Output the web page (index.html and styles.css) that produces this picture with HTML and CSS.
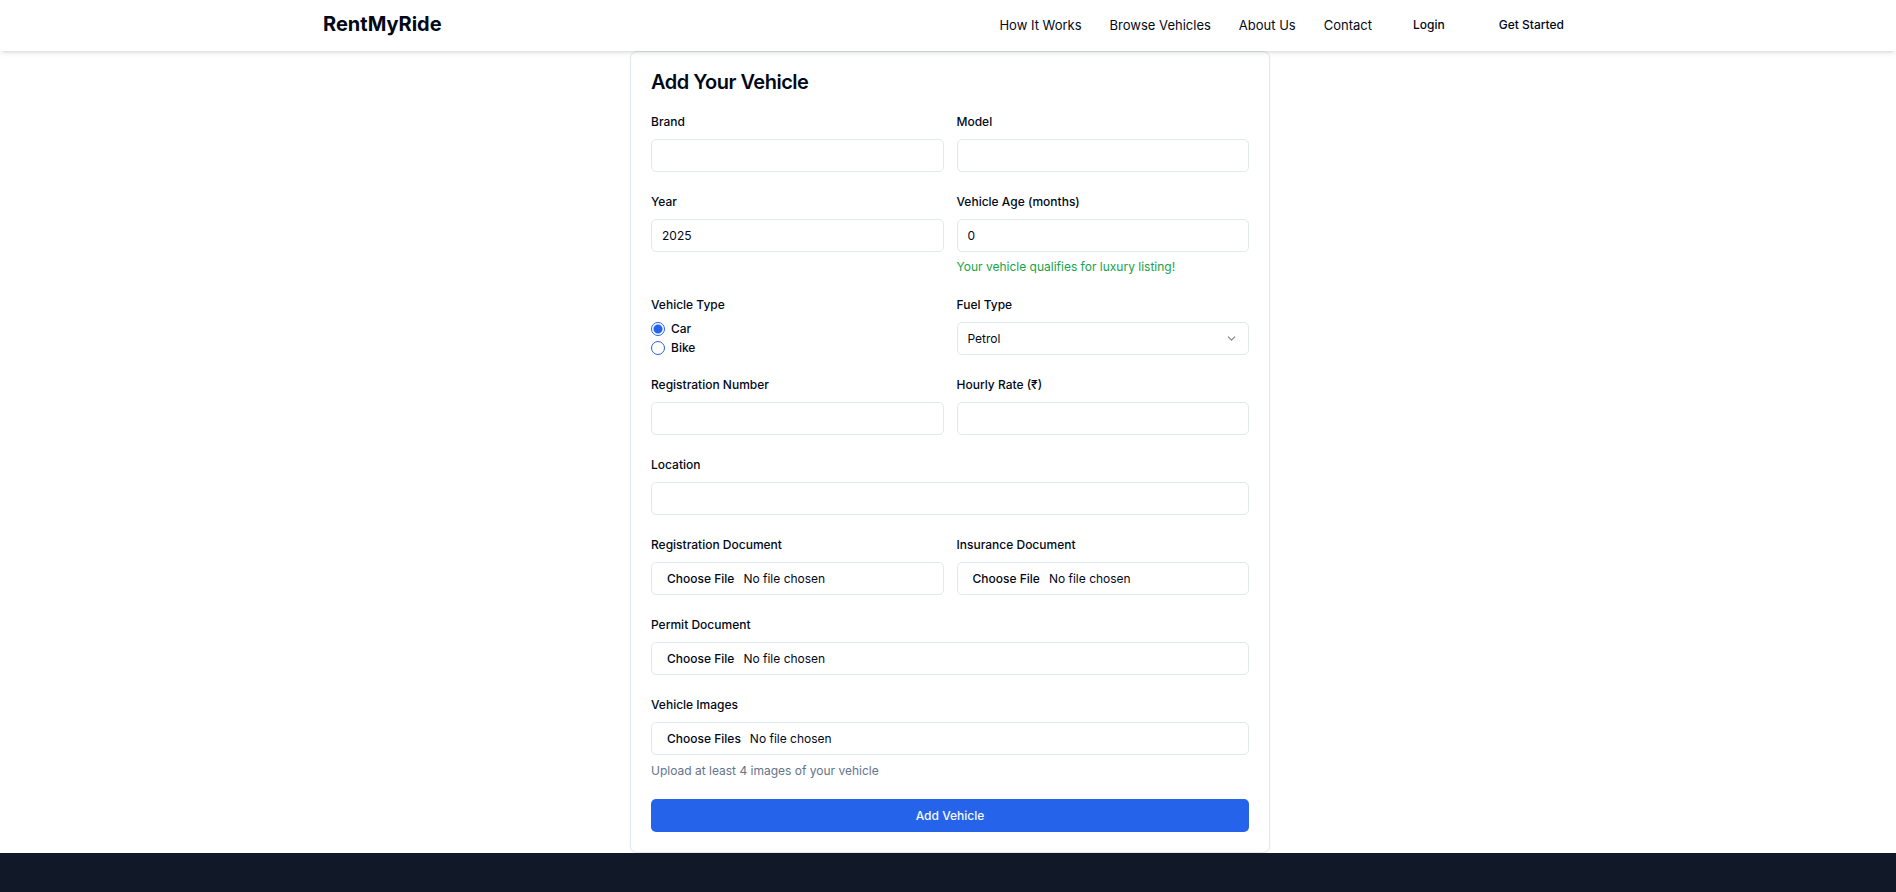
FILE: index.html
```html
<!DOCTYPE html>
<html lang="en">
<head>
  <meta charset="utf-8">
  <meta name="viewport" content="width=device-width, initial-scale=1">
  <title>RentMyRide</title>
  <link rel="stylesheet" href="styles.css">
</head>
<body>
  <header class="header">
    <div class="header-inner">
      <a class="logo" href="#">RentMyRide</a>
      <nav class="nav">
        <a class="nav-link" href="#">How It Works</a>
        <a class="nav-link" href="#">Browse Vehicles</a>
        <a class="nav-link" href="#">About Us</a>
        <a class="nav-link" href="#">Contact</a>
        <button class="ghost" type="button">Login</button>
        <button class="ghost" type="button">Get Started</button>
      </nav>
    </div>
  </header>

  <main class="main">
    <section class="card">
      <h1 class="title">Add Your Vehicle</h1>
      <form class="form">
        <div class="row">
          <div class="field">
            <label class="label" for="brand">Brand</label>
            <input class="control" id="brand" type="text">
          </div>
          <div class="field">
            <label class="label" for="model">Model</label>
            <input class="control" id="model" type="text">
          </div>
        </div>
        <div class="row">
          <div class="field">
            <label class="label" for="year">Year</label>
            <input class="control" id="year" type="number" value="2025">
          </div>
          <div class="field">
            <label class="label" for="age">Vehicle Age (months)</label>
            <input class="control" id="age" type="number" value="0">
            <p class="hint success">Your vehicle qualifies for luxury listing!</p>
          </div>
        </div>
        <div class="row">
          <div class="field" role="radiogroup" aria-labelledby="type-label">
            <span class="label" id="type-label">Vehicle Type</span>
            <div class="radios">
              <div class="option">
                <input class="radio" type="radio" name="type" id="car" checked>
                <label class="option-label" for="car">Car</label>
              </div>
              <div class="option">
                <input class="radio" type="radio" name="type" id="bike">
                <label class="option-label" for="bike">Bike</label>
              </div>
            </div>
          </div>
          <div class="field">
            <label class="label" for="fuel">Fuel Type</label>
            <div class="select-wrap">
              <select class="control select" id="fuel">
                <option>Petrol</option>
                <option>Diesel</option>
                <option>Electric</option>
              </select>
              <svg class="chevron" viewBox="0 0 24 24" fill="none" stroke="currentColor" stroke-width="2" stroke-linecap="round" stroke-linejoin="round" aria-hidden="true"><path d="m6 9 6 6 6-6"/></svg>
            </div>
          </div>
        </div>
        <div class="row">
          <div class="field">
            <label class="label" for="reg">Registration Number</label>
            <input class="control" id="reg" type="text">
          </div>
          <div class="field">
            <label class="label" for="rate">Hourly Rate (₹)</label>
            <input class="control" id="rate" type="number">
          </div>
        </div>
        <div class="field">
          <label class="label" for="location">Location</label>
          <input class="control" id="location" type="text">
        </div>
        <div class="row">
          <div class="field">
            <label class="label" for="reg-doc">Registration Document</label>
            <input class="control file" id="reg-doc" type="file">
          </div>
          <div class="field">
            <label class="label" for="ins-doc">Insurance Document</label>
            <input class="control file" id="ins-doc" type="file">
          </div>
        </div>
        <div class="field">
          <label class="label" for="permit">Permit Document</label>
          <input class="control file" id="permit" type="file">
        </div>
        <div class="field">
          <label class="label" for="images">Vehicle Images</label>
          <input class="control file" id="images" type="file" multiple>
          <p class="hint">Upload at least 4 images of your vehicle</p>
        </div>
        <button class="submit" type="submit">Add Vehicle</button>
      </form>
    </section>
  </main>

  <footer class="footer"></footer>
</body>
</html>
```
FILE: styles.css
```css
* {
  box-sizing: border-box;
}

body {
  margin: 0;
  min-height: 100vh;
  display: flex;
  flex-direction: column;
  background: #fff;
  color: #020817;
  font-family: Inter, "Liberation Sans", sans-serif;
  font-size: 12px;
  line-height: 17px;
}

.header {
  position: sticky;
  top: 0;
  z-index: 10;
  padding-left: 4px;
  background: #fff;
  box-shadow: 0 3px 5px -1px rgba(0, 0, 0, 0.1), 0 2px 3px -2px rgba(0, 0, 0, 0.1);
}

.header-inner {
  max-width: 1280px;
  margin: 0 auto;
  padding: 8px 13px 10px;
  display: flex;
  align-items: center;
  justify-content: space-between;
}

.logo {
  color: inherit;
  font-size: 20px;
  font-weight: 700;
  line-height: 23px;
  text-decoration: none;
}

.nav {
  display: flex;
  align-items: center;
  gap: 28px;
}

.nav-link {
  color: inherit;
  font-size: 13px;
  line-height: 20px;
  text-decoration: none;
}

.ghost {
  height: 33px;
  padding: 0 13px;
  border: 0;
  border-radius: 5px;
  background: transparent;
  color: inherit;
  font: inherit;
  font-weight: 500;
}

.main {
  padding-left: 4px;
}

.card {
  max-width: 640px;
  margin: 0 auto;
  padding: 20px;
  border: 1px solid #e2e8f0;
  border-radius: 7px;
  box-shadow: 0 1px 2px rgba(0, 0, 0, 0.05);
}

.title {
  margin: 0 0 20px;
  font-size: 20px;
  font-weight: 600;
  line-height: 20px;
  letter-spacing: -0.025em;
}

.form {
  display: flex;
  flex-direction: column;
  gap: 20px;
}

.row {
  display: grid;
  grid-template-columns: 1fr 1fr;
  gap: 13px;
}

.field {
  display: flex;
  flex-direction: column;
  gap: 7px;
  min-width: 0;
}

.label {
  font-weight: 500;
  line-height: 20px;
}

.control {
  width: 100%;
  height: 33px;
  padding: 0 10px;
  border: 1px solid #e2e8f0;
  border-radius: 5px;
  background: #fff;
  color: inherit;
  font: inherit;
  appearance: none;
}

.file {
  padding: 7px 10px;
  line-height: 17px;
}

.file::file-selector-button {
  margin: 0 4px 0 0;
  padding: 0 5px;
  border: 0;
  background: transparent;
  color: inherit;
  font: inherit;
  font-weight: 500;
}

.hint {
  margin: 0;
  color: #64748b;
}

.success {
  color: #16a34a;
  line-height: 16px;
}

.radios {
  display: grid;
  gap: 5px;
}

.option {
  display: flex;
  align-items: center;
  gap: 6px;
}

.option-label {
  font-weight: 500;
  line-height: 12px;
}

.radio {
  appearance: none;
  width: 14px;
  height: 14px;
  margin: 0;
  border: 1px solid #2563eb;
  border-radius: 50%;
}

.radio:checked {
  background: radial-gradient(circle, #2563eb 4px, transparent 5px);
}

.select-wrap {
  position: relative;
}

.select {
  display: block;
}

.chevron {
  position: absolute;
  top: 10px;
  right: 11px;
  width: 13px;
  height: 13px;
  opacity: 0.5;
  pointer-events: none;
}

.submit {
  height: 33px;
  border: 0;
  border-radius: 5px;
  background: #2563eb;
  color: #f8fafc;
  font: inherit;
  font-weight: 500;
}

.footer {
  flex: 1;
  min-height: 39px;
  background: #111827;
}
```
